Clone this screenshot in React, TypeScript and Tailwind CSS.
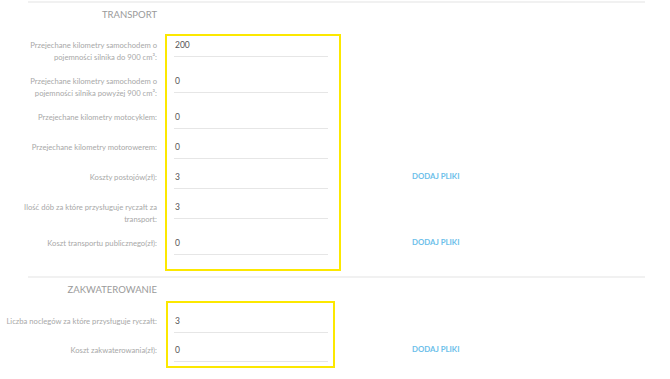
import React from 'react';

type Field = { label: string[]; value: string; upload?: boolean };

const transport: Field[] = [
  { label: ['Przejechane kilometry samochodem o', 'pojemności silnika do 900 cm³:'], value: '200' },
  { label: ['Przejechane kilometry samochodem o', 'pojemności silnika powyżej 900 cm³:'], value: '0' },
  { label: ['Przejechane kilometry motocyklem:'], value: '0' },
  { label: ['Przejechane kilometry motorowerem:'], value: '0' },
  { label: ['Koszty postojów(zł):'], value: '3', upload: true },
  { label: ['Ilość dób za które przysługuje ryczałt za', 'transport:'], value: '3' },
  { label: ['Koszt transportu publicznego(zł):'], value: '0', upload: true },
];

const lodging: Field[] = [
  { label: ['Liczba noclegów za które przysługuje ryczałt:'], value: '3' },
  { label: ['Koszt zakwaterowania(zł):'], value: '0', upload: true },
];

const Row = ({ field, gap }: { field: Field; gap: string }) => (
  <div className={`flex items-start ${gap}`}>
    <div className="w-[157px] shrink-0 text-right text-[7.65px] leading-[12px] text-[#a8a8a8] whitespace-nowrap">
      {field.label.map((line) => (
        <div key={line}>{line}</div>
      ))}
    </div>
    <div className="ml-[17px] w-[154px] shrink-0 border-b border-[#e6e6e6] pb-[5px] pl-[1px] text-[8.5px] leading-[12px] text-[#555]">
      {field.value}
    </div>
    {field.upload && (
      <button className="ml-[84px] text-[7.8px] leading-[11px] font-bold text-[#6cc0ea]">
        DODAJ PLIKI
      </button>
    )}
  </div>
);

const Section = ({
  title,
  fields,
  headGap,
  rowGap,
}: {
  title: string;
  fields: Field[];
  headGap: string;
  rowGap: string;
}) => (
  <section>
    <div className="ml-[28px] w-[617px] h-[2px] bg-[#f1f1f1]" />
    <h2 className={`mt-[5px] ${headGap} w-[157px] text-right text-[9.5px] leading-[14px] font-normal text-[#9a9a9a]`}>
      {title}
    </h2>
    {fields.map((f) => (
      <Row key={f.label.join(' ')} field={f} gap={rowGap} />
    ))}
  </section>
);

export default function App() {
  return (
    <div
      className="relative w-[670px] h-[379px] overflow-hidden bg-white pt-[1px]"
      style={{ fontFamily: 'Lato, "Noto Sans", sans-serif' }}
    >
      <Section title="TRANSPORT" fields={transport} headGap="mb-[17px]" rowGap="mb-[12px]" />
      <div className="h-[9px]" />
      <Section title="ZAKWATEROWANIE" fields={lodging} headGap="mb-[18px]" rowGap="mb-[11px]" />

      {/* highlight frames */}
      <div className="absolute left-[165px] top-[34px] w-[176px] h-[237px] border-2 border-[#fce800] pointer-events-none" />
      <div className="absolute left-[166px] top-[301px] w-[169px] h-[67px] border-2 border-[#fce800] pointer-events-none" />
    </div>
  );
}
